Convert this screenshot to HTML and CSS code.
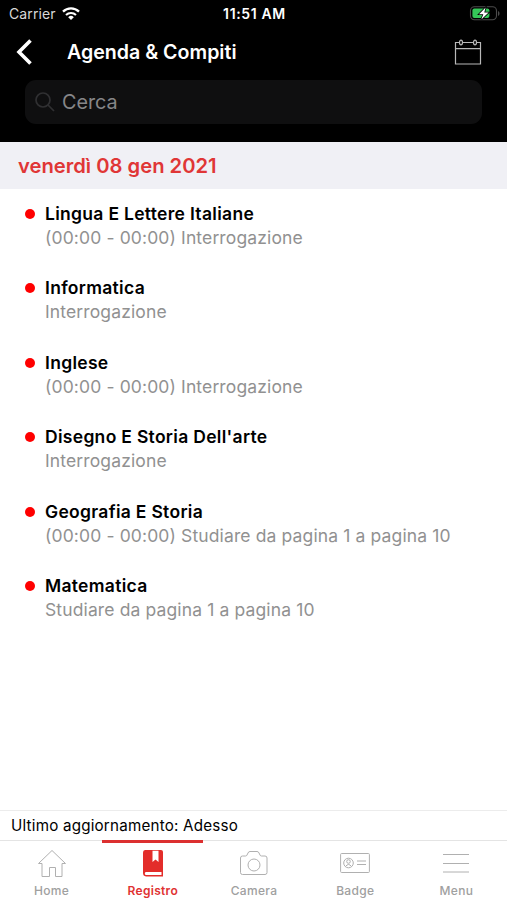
FILE: index.html
```html
<!DOCTYPE html>
<html lang="it">
<head>
  <meta charset="UTF-8" />
  <meta name="viewport" content="width=device-width, initial-scale=1.0"/>
  <title>Agenda &amp; Compiti</title>
  <link rel="stylesheet" href="styles.css">
</head>
<body>
<header class="top">
  <div class="status">
    <div class="carrier">
      <span>Carrier</span>
      <svg class="wifi" width="18" height="13" viewBox="0 0 18 13">
        <path d="M1 4.600a11.500 11.500 0 0 1 16 0" fill="none" stroke="#fff" stroke-width="2.300"/>
        <path d="M4 8a7.200 7.200 0 0 1 10 0" fill="none" stroke="#fff" stroke-width="2.100"/>
        <path d="M9 13L6.200 10.200a4 4 0 0 1 5.600 0z" fill="#fff"/>
      </svg>
    </div>
    <span class="time">11:51 AM</span>
    <svg class="battery" width="31" height="15" viewBox="0 0 31 15">
      <rect x="1.500" y=".8" width="26" height="13" rx="4" fill="none" stroke="#4c4c4c" stroke-width="1.100"/>
      <rect x="3.400" y="2.600" width="17" height="9.400" rx="2" fill="#35c759"/>
      <path d="M29 5v5c2-.8 2-4.200 0-5z" fill="#4c4c4c"/>
      <path d="M16.600 1.500L10 8.200h4.300L12.300 13.500 19.600 6.600h-4.300z" fill="#fff" stroke="#000" stroke-width="1.600" paint-order="stroke"/>
    </svg>
  </div>

  <div class="navbar">
    <svg class="back" width="18" height="28" viewBox="0 0 18 28">
      <path d="M15.500 2.500L4 14 15.500 25.500" fill="none" stroke="#fff" stroke-width="3.600"/>
    </svg>
    <h1>Agenda &amp; Compiti</h1>
    <svg class="calendar" width="28" height="27" viewBox="0 0 28 27">
      <g fill="none" stroke="#b8b8b8" stroke-width="1.200">
        <path d="M5.500 3.500H1.500V25h25V3.500H22.500M8.500 3.500h11M1.500 9.700h25"/>
        <ellipse cx="7" cy="3.500" rx="1.500" ry="2.300"/>
        <ellipse cx="21" cy="3.500" rx="1.500" ry="2.300"/>
      </g>
    </svg>
  </div>

  <div class="search">
    <svg width="20" height="20" viewBox="0 0 20 20">
      <g fill="none" stroke="#303032" stroke-width="1.700">
        <circle cx="8" cy="8" r="7"/>
        <path d="M13 13l6 6"/>
      </g>
    </svg>
    <span>Cerca</span>
  </div>
</header>

<h2 class="day">venerdì 08 gen 2021</h2>

<ul class="list">
  <li>
    <h3>Lingua E Lettere Italiane</h3>
    <p>(00:00 - 00:00) Interrogazione</p>
  </li>
  <li>
    <h3>Informatica</h3>
    <p>Interrogazione</p>
  </li>
  <li>
    <h3>Inglese</h3>
    <p>(00:00 - 00:00) Interrogazione</p>
  </li>
  <li>
    <h3>Disegno E Storia Dell'arte</h3>
    <p>Interrogazione</p>
  </li>
  <li>
    <h3>Geografia E Storia</h3>
    <p>(00:00 - 00:00) Studiare da pagina 1 a pagina 10</p>
  </li>
  <li>
    <h3>Matematica</h3>
    <p>Studiare da pagina 1 a pagina 10</p>
  </li>
</ul>

<div class="updated">Ultimo aggiornamento: Adesso</div>

<nav class="tabs">
  <a class="tab">
    <svg width="30" height="30" viewBox="0 0 30 30">
      <path d="M1.500 15.500L15 2.500l13.500 13H25v13h-6.500v-9h-6v9H5v-13z"/>
    </svg>
    <span>Home</span>
  </a>
  <a class="tab active">
    <svg width="30" height="30" viewBox="0 0 30 30">
      <path class="solid" d="M7 2H23q2 0 2 2v24.500H8q-3-.5-3-3.500V4.500Q5 2 7 2z"/>
      <path class="paper" d="M14.500 2.800H20.500v11.200l-3-2.500-3 2.500zM7.500 24h16v3h-16q-1.500-1.500 0-3z"/>
    </svg>
    <span>Registro</span>
  </a>
  <a class="tab">
    <svg width="30" height="30" viewBox="0 0 30 30">
      <path d="M3.500 8h3q1.500 0 2-2l.5-1q.5-1.500 2-1.500h7q1.500 0 2 1.500l.5 1q.5 2 2 2h3.500q2 0 2 2v14.500q0 2-2 2h-22.500q-2 0-2-2V10q0-2 2-2z"/>
      <circle cx="15" cy="17" r="6"/>
    </svg>
    <span>Camera</span>
  </a>
  <a class="tab">
    <svg width="30" height="30" viewBox="0 0 30 30">
      <rect x=".6" y="5.500" width="28.800" height="19" rx="1"/>
      <circle cx="8.500" cy="15" r="4.800"/>
      <circle cx="8.500" cy="13.500" r="1.800"/>
      <path d="M5.500 18.500q3-4 6 0M17 13h9M17 16.500h9"/>
    </svg>
    <span>Badge</span>
  </a>
  <a class="tab">
    <svg width="30" height="30" viewBox="0 0 30 30">
      <path d="M2 6.500h26M2 15.500h26M2 24h26"/>
    </svg>
    <span>Menu</span>
  </a>
</nav>
</body>
</html>
```
FILE: styles.css
```css
* {
  box-sizing: border-box;
}

body {
  margin: 0;
  height: 900px;
  display: flex;
  flex-direction: column;
  background: #fff;
  color: #000;
  font-family: Inter, "Liberation Sans", sans-serif;
  overflow: hidden;
}

h1, h2, h3, p, ul {
  margin: 0;
  padding: 0;
}

svg {
  display: block;
}

.top {
  height: 142px;
  background: #000;
  color: #fff;
}

.status {
  display: grid;
  grid-template-columns: 1fr auto 1fr;
  align-items: center;
  height: 27px;
  padding: 0 7px 0 9px;
  font-size: 14px;
}

.carrier {
  display: flex;
  align-items: center;
  gap: 6px;
  color: #d8d8d8;
  letter-spacing: 0.1px;
}

.time {
  font-weight: 600;
  letter-spacing: 0.65px;
}

.battery {
  justify-self: end;
}

.navbar {
  display: flex;
  align-items: center;
  height: 50px;
  padding: 0 25px 0 15px;
}

.navbar h1 {
  flex: 1;
  margin-left: 34px;
  font-size: 19.600px;
  font-weight: 600;
}

.search {
  display: flex;
  align-items: center;
  gap: 7px;
  height: 44px;
  margin: 3px 25px 0;
  padding-left: 10px;
  border-radius: 11px;
  background: #0f0f10;
  color: #868688;
  font-size: 19.800px;
}

.day {
  height: 47px;
  padding-left: 18px;
  background: #f0f0f5;
  color: #e03636;
  font-size: 20.200px;
  font-weight: 600;
  line-height: 48px;
}

.list {
  flex: 1;
  padding: 13px 0 0 45px;
  list-style: none;
}

.list li {
  height: 74.400px;
  line-height: 24px;
}

.list h3 {
  display: flex;
  align-items: center;
  font-size: 17.500px;
  font-weight: 600;
  letter-spacing: 0.3px;
}

.list h3::before {
  content: "";
  width: 10px;
  height: 10px;
  margin: 0 10px 0 -20px;
  border-radius: 50%;
  background: #f00;
}

.list p {
  color: #919191;
  font-size: 17.500px;
  letter-spacing: 0.13px;
}

.updated {
  height: 30px;
  padding-left: 11px;
  border-top: 1px solid #ececec;
  font-size: 15.200px;
  letter-spacing: 0.2px;
  line-height: 30px;
}

.tabs {
  display: flex;
  height: 60px;
  padding-left: 1px;
  border-top: 1px solid #e4e4e4;
}

.tab {
  flex: 1;
  display: flex;
  flex-direction: column;
  align-items: center;
  gap: 5px;
  padding-top: 5px;
  border-top: 3px solid transparent;
  margin-top: -1px;
  color: #a0a0a0;
  font-size: 12px;
  font-weight: 500;
  letter-spacing: 0.3px;
}

.tab.active {
  border-color: #dc3030;
  color: #e03232;
  font-weight: 600;
}

.tab svg {
  fill: none;
  stroke: #b0b0b0;
}

.tab .solid {
  fill: #e32d2a;
  stroke: none;
}

.tab .paper {
  fill: #fff;
  stroke: none;
}
```
